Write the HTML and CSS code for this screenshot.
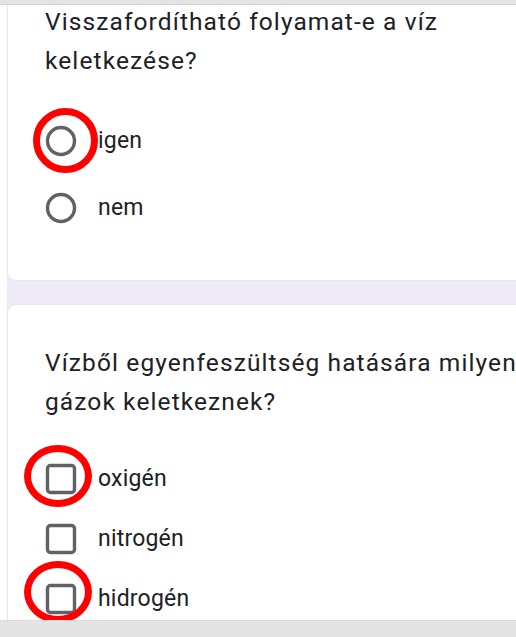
FILE: index.html
```html
<!DOCTYPE html>
<html lang="hu">
<head>
<meta charset="utf-8">
<link rel="stylesheet" href="styles.css">
</head>
<body>
<div class="topbar"></div>
<main class="page">
  <section class="card card-first">
    <h2 class="q-title">Visszafordítható folyamat-e a víz keletkezése?</h2>
    <div class="options">
      <label class="opt opt-radio">
        <svg class="ico" viewBox="0 0 32 32"><circle cx="16" cy="16" r="13.5" fill="none" stroke="#5f6368" stroke-width="3.4"/></svg>
        <span class="opt-text">igen</span>
        <span class="mark mark-radio"></span>
      </label>
      <label class="opt opt-radio">
        <svg class="ico" viewBox="0 0 32 32"><circle cx="16" cy="16" r="13.5" fill="none" stroke="#5f6368" stroke-width="3.4"/></svg>
        <span class="opt-text">nem</span>
      </label>
    </div>
  </section>
  <section class="card card-second">
    <h2 class="q-title">Vízből egyenfeszültség hatására milyen gázok keletkeznek?</h2>
    <div class="options options-check">
      <label class="opt opt-check">
        <svg class="ico" viewBox="0 0 32 32"><rect x="2.5" y="2.5" width="27" height="27" rx="3" fill="none" stroke="#5f6368" stroke-width="3.4"/></svg>
        <span class="opt-text">oxigén</span>
        <span class="mark mark-check mark-oxi"></span>
      </label>
      <label class="opt opt-check">
        <svg class="ico" viewBox="0 0 32 32"><rect x="2.5" y="2.5" width="27" height="27" rx="3" fill="none" stroke="#5f6368" stroke-width="3.4"/></svg>
        <span class="opt-text">nitrogén</span>
      </label>
      <label class="opt opt-check">
        <svg class="ico" viewBox="0 0 32 32"><rect x="2.5" y="2.5" width="27" height="27" rx="3" fill="none" stroke="#5f6368" stroke-width="3.4"/></svg>
        <span class="opt-text">hidrogén</span>
        <span class="mark mark-check mark-hidro"></span>
      </label>
    </div>
  </section>
</main>
<div class="bottombar"></div>
</body>
</html>
```

FILE: styles.css
```css
* { box-sizing: border-box; }
html, body {
  margin: 0;
  padding: 0;
  background: #ffffff;
  width: 516px;
  height: 637px;
  overflow: hidden;
}
body {
  font-family: Roboto, "Noto Sans", "Liberation Sans", sans-serif;
  color: #202124;
}
.topbar {
  position: fixed;
  left: 0;
  top: 0;
  width: 100%;
  height: 5px;
  background: #e4e4e4;
  border-bottom: 1px solid #d2d2d2;
  z-index: 5;
}
.bottombar {
  position: fixed;
  left: 0;
  bottom: 0;
  width: 100%;
  height: 17px;
  background: #e4e4e4;
  border-top: 1px solid #dcdcdc;
  z-index: 5;
}
.page {
  margin-left: 7px;
  width: 580px;
  background: #eeeaf8;
  display: flex;
  flex-direction: column;
  gap: 23px;
}
.card {
  background: #ffffff;
  padding-left: 37px;
  border: 1px solid #e6e4ec;
}
.card-first {
  border-top: none;
  border-radius: 0 0 9px 9px;
  padding-top: 2px;
  height: 281px;
}
.card-second {
  border-bottom: none;
  border-radius: 9px 9px 0 0;
  padding-top: 38px;
  height: 400px;
}
.q-title {
  margin: 0;
  font-weight: 400;
  font-size: 24.5px;
  line-height: 39px;
  width: 530px;
  letter-spacing: 1.1px;
}
.card-first .q-title { width: 450px; }
.options {
  display: flex;
  flex-direction: column;
  margin-top: 27px;
}
.options-check { margin-top: 28px; }
.opt {
  position: relative;
  display: flex;
  align-items: center;
  gap: 21px;
  font-size: 23px;
  line-height: 32px;
  letter-spacing: 0.2px;
}
.opt-radio { height: 67px; }
.opt-check { height: 60px; }
.ico {
  width: 32px;
  height: 32px;
  flex: none;
}
.opt-text { display: block; }
.mark {
  position: absolute;
  top: 50%;
  border: 7px solid #ff0000;
  border-radius: 50%;
  pointer-events: none;
}
.mark-radio {
  left: -12px;
  width: 65px;
  height: 65px;
  margin-top: -33px;
}
.mark-check {
  left: -21px;
  width: 68px;
  height: 62px;
}
.mark-oxi { margin-top: -34.5px; }
.mark-hidro { margin-top: -38px; }
```
